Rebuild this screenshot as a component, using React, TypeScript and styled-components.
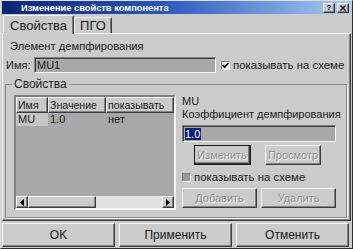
import React from 'react';
import styled, { createGlobalStyle, css } from 'styled-components';

const face = '#cbcbcb';
const field = '#a8a8a8';
const shade = '#808080';
const dark = '#3c3c3c';
const hi = '#f6f6f6';

const GlobalStyle = createGlobalStyle`
  html, body { margin: 0; padding: 0; background: ${face}; }
  body {
    font-family: "Liberation Sans", Arial, sans-serif;
    font-size: 11px;
    color: #1a1a1a;
  }
  * { box-sizing: border-box; }
`;

const raised = css`
  border: 1px solid;
  border-color: ${hi} ${dark} ${dark} ${hi};
  box-shadow: inset -1px -1px 0 ${shade};
`;

const sunken = css`
  border: 1px solid;
  border-color: ${shade} ${hi} ${hi} ${shade};
  box-shadow: inset 1px 1px 0 ${dark};
`;

const Dialog = styled.div`
  width: 353px;
  height: 249px;
  background: ${face};
  border: 1px solid;
  border-color: #dedede #303030 #303030 #dedede;
  display: flex;
  flex-direction: column;
`;

const TitleBar = styled.div`
  height: 13px;
  margin: 0 1px;
  padding-left: 19px;
  display: flex;
  align-items: center;
  background: linear-gradient(to right, #0b2470 0%, #2a55b8 45%, #a9cdf2 100%);
  color: #fff;
  font-size: 9.3px;
  font-weight: bold;
`;

const TitleText = styled.span`
  flex: 1;
`;

const CaptionButton = styled.div`
  width: 12px;
  height: 10px;
  margin-right: 1px;
  background: ${face};
  ${raised};
  display: flex;
  align-items: center;
  justify-content: center;
  color: #000;
  font-size: 8px;
  font-weight: bold;
  line-height: 1;
  &:last-child { margin-right: 2px; margin-left: 1px; }
`;

const TabStrip = styled.div`
  height: 19px;
  padding-left: 2px;
  display: flex;
  align-items: flex-end;
`;

const Tab = styled.div<{ $active?: boolean }>`
  position: relative;
  height: ${p => (p.$active ? 19 : 16)}px;
  margin-bottom: ${p => (p.$active ? -1 : 0)}px;
  padding: 0 ${p => (p.$active ? 6 : 5)}px;
  background: ${face};
  border: 1px solid;
  border-bottom: none;
  border-color: ${hi} ${dark} transparent ${hi};
  box-shadow: inset -1px 0 0 ${shade};
  border-radius: 2px 2px 0 0;
  z-index: ${p => (p.$active ? 2 : 1)};
  display: flex;
  align-items: ${p => (p.$active ? 'flex-start' : 'center')};
  padding-top: ${p => (p.$active ? 2 : 0)}px;
  font-size: 13px;
`;

const TabPanel = styled.div`
  height: 188px;
  margin: 0 1px;
  border: 1px solid;
  border-color: ${hi} ${dark} ${dark} ${hi};
  box-shadow: inset -1px -1px 0 ${shade};
  display: flex;
  flex-direction: column;
  padding: 0 3px 2px 0;
`;

const SectionTitle = styled.div`
  margin: 6px 0 0 7px;
  line-height: 13px;
  font-size: 11.2px;
`;

const NameRow = styled.div`
  margin-top: 4px;
  height: 16px;
  padding-left: 3px;
  display: flex;
  align-items: center;
`;

const FieldLabel = styled.span`
  width: 28px;
`;

const TextField = styled.div<{ $w: number; $h: number }>`
  width: ${p => p.$w}px;
  height: ${p => p.$h}px;
  background: ${field};
  ${sunken};
  padding-left: 2px;
  display: flex;
  align-items: center;
`;

const Selected = styled.span`
  background: #0a1f78;
  color: #fff;
  line-height: 12px;
  padding-right: 1px;
`;

const CheckRow = styled.label`
  display: flex;
  align-items: center;
  gap: 3px;
  white-space: nowrap;
  font-size: 11.4px;
`;

const CheckBox = styled.span<{ $checked?: boolean }>`
  width: 9px;
  height: 9px;
  background: ${p => (p.$checked ? '#ececec' : '#9a9a9a')};
  border: 1px solid;
  border-color: ${shade} ${hi} ${hi} ${shade};
  display: flex;
  align-items: center;
  justify-content: center;
`;

const Group = styled.fieldset`
  margin: 5px 0 0 2px;
  padding: 4px 7px 0 8px;
  border: 1px solid #8a8a8a;
  box-shadow: 1px 1px 0 ${hi};
  flex: 1;
  min-width: 0;
  display: flex;
`;

const Legend = styled.legend`
  padding: 0 2px;
  margin-left: -2px;
  line-height: 13px;
  font-size: 12px;
`;

const GroupBody = styled.div`
  display: flex;
  gap: 6px;
  height: 115px;
`;

const ListView = styled.div`
  width: 162px;
  height: 115px;
  border: 2px solid;
  border-color: ${shade} ${hi} ${hi} ${shade};
  background: ${field};
  display: flex;
  flex-direction: column;
`;

const HeaderRow = styled.div`
  height: 16px;
  display: flex;
  background: ${face};
  font-size: 10.6px;
`;

const HeaderCell = styled.div<{ $w: number }>`
  width: ${p => p.$w}px;
  ${raised};
  padding-left: 1px;
  display: flex;
  align-items: center;
  white-space: nowrap;
  overflow: hidden;
`;

const DataRow = styled.div`
  height: 13px;
  display: flex;
`;

const DataCell = styled.div<{ $w: number; $hl?: boolean }>`
  width: ${p => p.$w}px;
  padding-left: 2px;
  line-height: 13px;
  background: ${p => (p.$hl ? '#c6c6c6' : 'transparent')};
`;

const ListFill = styled.div`
  flex: 1;
`;

const HScroll = styled.div`
  height: 12px;
  display: flex;
  background: #e2e2e2;
`;

const ScrollPart = styled.div<{ $w: number }>`
  width: ${p => p.$w}px;
  background: ${face};
  ${raised};
  display: flex;
  align-items: center;
  justify-content: center;
`;

const ScrollTrack = styled.div`
  flex: 1;
`;

const RightPane = styled.div`
  width: 154px;
  display: flex;
  flex-direction: column;
`;

const Line = styled.div`
  line-height: 13px;
  white-space: nowrap;
`;

const ButtonRow = styled.div<{ $indent?: number; $gap: number; $top: number }>`
  display: flex;
  gap: ${p => p.$gap}px;
  padding-left: ${p => p.$indent || 0}px;
  margin-top: ${p => p.$top}px;
`;

const Button = styled.div<{ $w: number; $h: number; $disabled?: boolean; $default?: boolean }>`
  width: ${p => p.$w}px;
  height: ${p => p.$h}px;
  background: ${face};
  border: 1px solid;
  border-color: ${hi} ${dark} ${dark} ${hi};
  box-shadow: inset -1px -1px 0 ${shade};
  ${p => p.$default && css`
    outline: 1px solid #1a1a1a;
    outline-offset: -1px;
    border-width: 1px 2px 2px 1px;
  `}
  display: flex;
  align-items: center;
  justify-content: center;
  color: ${p => (p.$disabled ? '#8c8c8c' : '#1a1a1a')};
  text-shadow: ${p => (p.$disabled ? `1px 1px 0 ${hi}` : 'none')};
  white-space: nowrap;
`;

const FooterRow = styled.div`
  margin: 2px 1px 0 1px;
  display: flex;
  gap: 4px;
  font-size: 12px;
  color: #2a2a2a;
`;

const Arrow = ({ dir }: { dir: 'l' | 'r' }) => (
  <svg width="4" height="7" viewBox="0 0 4 7">
    <path d={dir === 'l' ? 'M4 0 L0 3.5 L4 7 Z' : 'M0 0 L4 3.5 L0 7 Z'} fill="#000" />
  </svg>
);

const Tick = () => (
  <svg width="7" height="7" viewBox="0 0 7 7">
    <path d="M0.5 3 L2.5 5 L6.5 1" stroke="#000" strokeWidth="1.6" fill="none" />
  </svg>
);

const cols = [32, 58, 68];

export default function App() {
  return (
    <>
      <GlobalStyle />
      <Dialog>
        <TitleBar>
          <TitleText>Изменение свойств компонента</TitleText>
          <CaptionButton>?</CaptionButton>
          <CaptionButton>
            <svg width="6" height="6" viewBox="0 0 6 6">
              <path d="M0.5 0.5 L5.5 5.5 M5.5 0.5 L0.5 5.5" stroke="#000" strokeWidth="1.4" />
            </svg>
          </CaptionButton>
        </TitleBar>
        <TabStrip>
          <Tab $active>Свойства</Tab>
          <Tab>ПГО</Tab>
        </TabStrip>
        <TabPanel>
          <SectionTitle>Элемент демпфирования</SectionTitle>
          <NameRow>
            <FieldLabel>Имя:</FieldLabel>
            <TextField $w={182} $h={16}>MU1</TextField>
            <CheckRow style={{ marginLeft: 5 }}>
              <CheckBox $checked><Tick /></CheckBox>
              показывать на схеме
            </CheckRow>
          </NameRow>
          <Group>
            <Legend>Свойства</Legend>
            <GroupBody>
              <ListView>
                <HeaderRow>
                  <HeaderCell $w={cols[0]}>Имя</HeaderCell>
                  <HeaderCell $w={cols[1]}>Значение</HeaderCell>
                  <HeaderCell $w={cols[2]}>показывать</HeaderCell>
                </HeaderRow>
                <DataRow>
                  <DataCell $w={cols[0]} $hl>MU</DataCell>
                  <DataCell $w={cols[1]}>1.0</DataCell>
                  <DataCell $w={cols[2]}>нет</DataCell>
                </DataRow>
                <ListFill />
                <HScroll>
                  <ScrollPart $w={12}><Arrow dir="l" /></ScrollPart>
                  <ScrollPart $w={68} />
                  <ScrollTrack />
                  <ScrollPart $w={12}><Arrow dir="r" /></ScrollPart>
                </HScroll>
              </ListView>
              <RightPane>
                <Line>MU</Line>
                <Line>Коэффициент демпфирования</Line>
                <TextField $w={154} $h={17} style={{ marginTop: 4 }}>
                  <Selected>1.0</Selected>
                </TextField>
                <ButtonRow $indent={12} $gap={14} $top={3}>
                  <Button $w={57} $h={20} $disabled $default>Изменить</Button>
                  <Button $w={56} $h={20} $disabled>Просмотр</Button>
                </ButtonRow>
                <CheckRow style={{ marginTop: 6, height: 12 }}>
                  <CheckBox />
                  показывать на схеме
                </CheckRow>
                <ButtonRow $gap={4} $top={5}>
                  <Button $w={75} $h={20} $disabled>Добавить</Button>
                  <Button $w={75} $h={20} $disabled>Удалить</Button>
                </ButtonRow>
              </RightPane>
            </GroupBody>
          </Group>
        </TabPanel>
        <FooterRow>
          <Button $w={113} $h={24}>OK</Button>
          <Button $w={113} $h={24}>Применить</Button>
          <Button $w={113} $h={24}>Отменить</Button>
        </FooterRow>
      </Dialog>
    </>
  );
}
